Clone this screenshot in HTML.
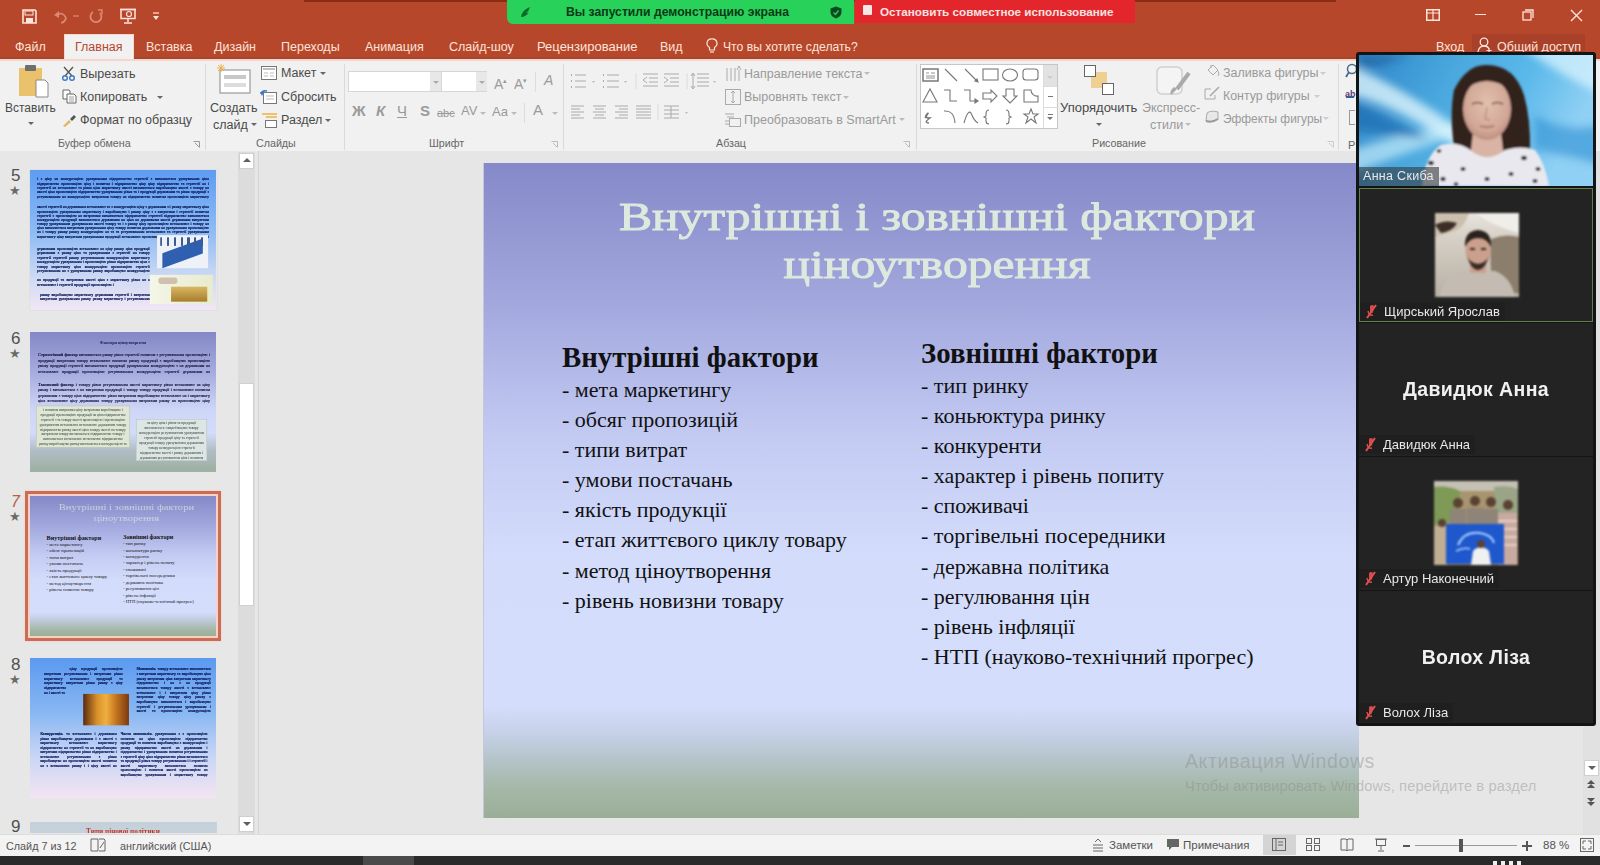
<!DOCTYPE html>
<html><head><meta charset="utf-8">
<style>
*{box-sizing:border-box;margin:0;padding:0}
html,body{width:1600px;height:865px;overflow:hidden;background:#e6e6e6;font-family:"Liberation Sans",sans-serif;position:relative}
.abs{position:absolute}
.t{position:absolute;white-space:nowrap;font-size:12.5px;color:#4a4a4a;line-height:14px}
.g{color:#9a9a9a}
.gl{position:absolute;top:137px;font-size:10.7px;color:#666;white-space:nowrap;line-height:12px}
.sep{position:absolute;top:64px;width:1px;height:86px;background:#dadada}
.dd{position:absolute;width:0;height:0;border-left:3px solid transparent;border-right:3px solid transparent;border-top:3px solid #666}
.ic{position:absolute}
.num{position:absolute;left:11px;font-size:17px;color:#505050;line-height:17px}
.star{position:absolute;left:9px;font-size:13px;color:#6a6a6a;line-height:13px}
.th{position:absolute;left:30px;width:187px;overflow:hidden}
.ln{position:absolute;height:2px;background:rgba(30,40,90,.55);filter:blur(.4px)}


#topbar{left:0;top:0;width:1600px;height:59px;background:#b7472a}
#ribbon{left:0;top:59px;width:1600px;height:92px;background:#f1f1f1;border-top:2px solid #f6d5cc}
#work{left:0;top:151px;width:1600px;height:684px;background:#e6e6e6}
#status{left:0;top:834px;width:1600px;height:22px;background:#f3f3f3;border-top:1px solid #dcdcdc}
#taskbar{left:0;top:856px;width:1600px;height:9px;background:#2a2a2a}
.tab{position:absolute;top:38px;font-size:13px;color:#fde4dc;white-space:nowrap}
#slide{left:484px;top:163px;width:875px;height:655px;overflow:hidden;background:linear-gradient(180deg,#8589c8 0%,#a3a9de 22%,#c3cbf3 42%,#d3dcfb 60%,#d4ddfb 83%,#c6d1e8 87%,#b5c4ca 91%,#a6b9aa 95%,#9aae97 100%)}
.sl{position:absolute;font-family:"Liberation Serif",serif;white-space:nowrap;color:#111}

#zoom{left:1356px;top:52px;width:240px;height:674px;background:#121416;border-radius:3px}
.tile{position:absolute;left:3px;width:234px;background:#232323}
.lbl{position:absolute;left:0;height:19px;background:rgba(30,30,30,.85);color:#e8e8e8;font-size:13px;line-height:19px;padding:0 5px 0 4px;white-space:nowrap}
.mic{display:inline-block;vertical-align:top;margin:2px 5px 0 1px}
.big{position:absolute;left:0;width:234px;text-align:center;color:#f0f0f0;font-weight:700;font-size:19.5px;letter-spacing:.4px}

</style></head><body>
<div id="topbar" class="abs">
<div class="abs" style="left:304px;top:0;width:1032px;height:1.5px;background:#8c2c14"></div><div class="abs" style="left:0;top:57px;width:1600px;height:1.5px;background:#a4452e"></div>
<svg class="ic" style="left:22px;top:9px" width="15" height="15" viewBox="0 0 15 15"><path d="M1 1H13L14 2V14H1Z" fill="none" stroke="#fde4dc" stroke-width="1.6"/><rect x="4" y="9" width="7" height="5" fill="#fde4dc"/><rect x="3" y="2" width="8" height="4" fill="none" stroke="#fde4dc" stroke-width="1"/></svg>
<svg class="ic" style="left:53px;top:9px" width="28" height="15" viewBox="0 0 28 15"><path d="M3 6 Q10 2 13 9 Q12 13 8 14" fill="none" stroke="#d98a74" stroke-width="1.8"/><path d="M1 6 L6 2 L6 9 Z" fill="#d98a74"/><path d="M20 7 L26 7" stroke="#d98a74" stroke-width="1.2"/></svg>
<svg class="ic" style="left:89px;top:9px" width="15" height="15" viewBox="0 0 15 15"><path d="M11 4 A5.5 5.5 0 1 1 4 3" fill="none" stroke="#d98a74" stroke-width="1.8"/><path d="M9 1 L13 1 L13 5" fill="none" stroke="#d98a74" stroke-width="1.5"/></svg>
<svg class="ic" style="left:119px;top:8px" width="18" height="16" viewBox="0 0 18 16"><rect x="2" y="1.5" width="14" height="9" fill="none" stroke="#fde4dc" stroke-width="1.5"/><path d="M1 1.5H17M9 10.5V14M5 15H13" stroke="#fde4dc" stroke-width="1.5"/><circle cx="10" cy="6" r="2.5" fill="none" stroke="#fde4dc" stroke-width="1.2"/></svg>
<svg class="ic" style="left:152px;top:11px" width="8" height="10" viewBox="0 0 8 10"><path d="M1 2H7" stroke="#fde4dc" stroke-width="1.2"/><path d="M1 5L7 5L4 9Z" fill="#fde4dc"/></svg>
<div class="abs" style="left:507px;top:0;width:347px;height:24px;background:#28d25a;border-radius:0 0 0 6px"></div>
<svg class="ic" style="left:520px;top:6px" width="12" height="12" viewBox="0 0 12 12"><path d="M1 11 Q2 4 10 1 Q9 5 6 7 Q8 7 9 6 Q6 11 1 11Z" fill="#0c6a28"/></svg>
<div class="t" style="left:566px;top:5px;font-size:12.2px;font-weight:700;color:#083a18">Вы запустили демонстрацию экрана</div>
<svg class="ic" style="left:830px;top:6px" width="12" height="13" viewBox="0 0 12 13"><path d="M6 0.5 L11.5 2.5 V6 Q11.5 10.5 6 12.5 Q0.5 10.5 0.5 6 V2.5 Z" fill="#0a4a20"/><path d="M3.5 6.5 L5.5 8.5 L8.5 4.5" stroke="#28d25a" stroke-width="1.3" fill="none"/></svg>
<div class="abs" style="left:855px;top:0;width:280px;height:23px;background:#e3262b"></div>
<div class="abs" style="left:863px;top:5px;width:9px;height:10px;background:#f6e6e6;border-radius:1px"></div>
<div class="t" style="left:880px;top:5px;font-size:11.7px;font-weight:700;color:#fbe2e2">Остановить совместное использование</div>
<svg class="ic" style="left:1426px;top:9px" width="14" height="12" viewBox="0 0 14 12"><rect x="0.75" y="0.75" width="12.5" height="10.5" fill="none" stroke="#fde4dc" stroke-width="1.5"/><path d="M7 1V11M1 4H13" stroke="#fde4dc" stroke-width="1.2"/></svg>
<div class="abs" style="left:1475px;top:14px;width:11px;height:1.3px;background:#fde4dc"></div>
<svg class="ic" style="left:1522px;top:9px" width="12" height="12" viewBox="0 0 12 12"><rect x="1" y="3" width="8" height="8" fill="none" stroke="#fde4dc" stroke-width="1.3"/><path d="M3 1H11V9" fill="none" stroke="#fde4dc" stroke-width="1.3"/></svg>
<svg class="ic" style="left:1570px;top:9px" width="13" height="13" viewBox="0 0 13 13"><path d="M1 1L12 12M12 1L1 12" stroke="#fde4dc" stroke-width="1.4"/></svg>
<div class="t" style="left:15px;top:40px;color:#fde4dc;font-size:12.5px">Файл</div>
<div class="abs" style="left:64px;top:34px;width:70px;height:27px;background:#f1f1f1;border:1px solid #f6d5cc;border-bottom:none"></div>
<div class="t" style="left:75px;top:40px;color:#b7472a;font-size:12.5px">Главная</div>
<div class="t" style="left:146px;top:40px;color:#fde4dc">Вставка</div>
<div class="t" style="left:214px;top:40px;color:#fde4dc">Дизайн</div>
<div class="t" style="left:281px;top:40px;color:#fde4dc">Переходы</div>
<div class="t" style="left:365px;top:40px;color:#fde4dc">Анимация</div>
<div class="t" style="left:449px;top:40px;color:#fde4dc">Слайд-шоу</div>
<div class="t" style="left:537px;top:40px;color:#fde4dc;font-size:13px">Рецензирование</div>
<div class="t" style="left:660px;top:40px;color:#fde4dc">Вид</div>
<svg class="ic" style="left:706px;top:38px" width="12" height="16" viewBox="0 0 12 16"><path d="M6 1 A4.5 4.5 0 0 1 8.5 9.5 V12 H3.5 V9.5 A4.5 4.5 0 0 1 6 1Z" fill="none" stroke="#fde4dc" stroke-width="1.2"/><path d="M4 14H8" stroke="#fde4dc" stroke-width="1.2"/></svg>
<div class="t" style="left:723px;top:40px;color:#fde4dc;font-size:12.2px">Что вы хотите сделать?</div>
<div class="t" style="left:1436px;top:40px;color:#fde4dc">Вход</div>
<div class="abs" style="left:1472px;top:34px;width:113px;height:20px;background:#a8402a"></div>
<svg class="ic" style="left:1477px;top:37px" width="16" height="16" viewBox="0 0 16 16"><circle cx="7" cy="5" r="3.8" fill="none" stroke="#fde4dc" stroke-width="1.3"/><path d="M1 15 Q2 9 7 9 Q11 9 12 12" fill="none" stroke="#fde4dc" stroke-width="1.3"/><path d="M12 11V16M9.5 13.5H14.5" stroke="#fde4dc" stroke-width="1.2"/></svg>
<div class="t" style="left:1497px;top:40px;color:#fde4dc">Общий доступ</div>
</div>
<div id="ribbon" class="abs"></div>
<div class="abs" id="rib" style="left:0;top:0;width:1600px;height:151px">
<!-- Clipboard -->
<svg class="ic" style="left:18px;top:64px" width="32" height="34" viewBox="0 0 32 34"><rect x="1" y="4" width="23" height="28" fill="#eac26c"/><rect x="7" y="1" width="11" height="6" rx="1" fill="#6e6e6e"/><path d="M18 16H27L30 19V33H18Z" fill="#fff" stroke="#8a8a8a" stroke-width="1"/></svg>
<div class="t" style="left:5px;top:101px;font-size:12px">Вставить</div>
<div class="dd" style="left:28px;top:122px"></div>
<svg class="ic" style="left:61px;top:66px" width="15" height="15" viewBox="0 0 15 15"><path d="M3 1L11 10M12 1L4 10" stroke="#555" stroke-width="1.3"/><circle cx="4" cy="12" r="2.3" fill="none" stroke="#3b78c4" stroke-width="1.4"/><circle cx="11" cy="12" r="2.3" fill="none" stroke="#3b78c4" stroke-width="1.4"/></svg>
<div class="t" style="left:80px;top:67px">Вырезать</div>
<svg class="ic" style="left:62px;top:89px" width="15" height="15" viewBox="0 0 15 15"><path d="M1 1H7L8 2V10H1Z" fill="#fff" stroke="#666"/><path d="M5 5H12L14 7V14H5Z" fill="#fff" stroke="#666"/><path d="M7 8H12M7 10H12M7 12H12" stroke="#888" stroke-width=".8"/></svg>
<div class="t" style="left:80px;top:90px">Копировать</div>
<div class="dd" style="left:157px;top:96px"></div>
<svg class="ic" style="left:62px;top:113px" width="15" height="15" viewBox="0 0 15 15"><path d="M1 13L7 7L9 9L3 14Z" fill="#e2b765"/><path d="M8 6L12 2L14 4L10 8Z" fill="#555"/></svg>
<div class="t" style="left:80px;top:113px">Формат по образцу</div>
<div class="gl" style="left:58px">Буфер обмена</div>
<svg class="ic" style="left:193px;top:141px" width="7" height="7" viewBox="0 0 7 7"><path d="M0.5 0.5H6.5V6.5" fill="none" stroke="#999"/><path d="M2 2L6 6" stroke="#999"/></svg>
<div class="sep" style="left:205px"></div>
<!-- Slides -->
<svg class="ic" style="left:216px;top:63px" width="36" height="32" viewBox="0 0 36 32"><rect x="4" y="7" width="30" height="23" fill="#fff" stroke="#9a9a9a" stroke-width="1.2"/><rect x="8" y="12" width="22" height="4" fill="#c8c8c8"/><rect x="8" y="20" width="22" height="4" fill="#dcdcdc"/><path d="M5 1V9M1 5H9M2 2L8 8M8 2L2 8" stroke="#f0b040" stroke-width="1"/></svg>
<div class="t" style="left:210px;top:101px">Создать</div>
<div class="t" style="left:213px;top:118px">слайд</div>
<div class="dd" style="left:251px;top:123px"></div>
<svg class="ic" style="left:261px;top:66px" width="16" height="14" viewBox="0 0 16 14"><rect x=".5" y=".5" width="15" height="13" fill="#fff" stroke="#777"/><path d="M2 3H14" stroke="#aaa" stroke-width="1.5"/><path d="M3 7H7M9 7H13M3 10H7M9 10H13" stroke="#bbb"/></svg>
<div class="t" style="left:281px;top:66px">Макет</div>
<div class="dd" style="left:320px;top:72px"></div>
<svg class="ic" style="left:260px;top:89px" width="17" height="15" viewBox="0 0 17 15"><rect x="3.5" y="3.5" width="13" height="11" fill="#fff" stroke="#777"/><path d="M6 7H14M6 10H14" stroke="#bbb"/><path d="M1 5 Q2 1 7 2" fill="none" stroke="#3b78c4" stroke-width="1.5"/><path d="M0 3L2 7L4 3Z" fill="#3b78c4"/></svg>
<div class="t" style="left:281px;top:90px">Сбросить</div>
<svg class="ic" style="left:261px;top:113px" width="17" height="15" viewBox="0 0 17 15"><path d="M1 1H16M5 4H16" stroke="#f0b040" stroke-width="1.3"/><rect x="4.5" y="7.5" width="11" height="7" fill="#fff" stroke="#777"/></svg>
<div class="t" style="left:281px;top:113px">Раздел</div>
<div class="dd" style="left:325px;top:119px"></div>
<div class="gl" style="left:256px">Слайды</div>
<div class="sep" style="left:344px"></div>
<!-- Font -->
<div class="abs" style="left:348px;top:71px;width:93px;height:21px;background:#fff;border:1px solid #d6d6d6"></div>
<div class="abs" style="left:430px;top:72px;width:11px;height:19px;background:#e8e8e8"></div>
<div class="abs" style="left:441px;top:71px;width:46px;height:21px;background:#fff;border:1px solid #d6d6d6"></div>
<div class="abs" style="left:476px;top:72px;width:11px;height:19px;background:#e8e8e8"></div>
<div class="dd" style="left:433px;top:81px;border-top-color:#aaa"></div>
<div class="dd" style="left:479px;top:81px;border-top-color:#aaa"></div>
<div class="t g" style="left:494px;top:74px;font-size:14px">A<sup style="font-size:7px">▴</sup></div>
<div class="t g" style="left:514px;top:74px;font-size:14px">A<sup style="font-size:7px">▾</sup></div>
<div class="abs" style="left:535px;top:72px;width:1px;height:20px;background:#ddd"></div>
<div class="t g" style="left:544px;top:73px;font-size:14px;font-style:italic">A</div>
<div class="t g" style="left:352px;top:104px;font-size:15px;font-weight:700">Ж</div>
<div class="t g" style="left:376px;top:104px;font-size:15px;font-style:italic;font-weight:700">К</div>
<div class="t g" style="left:397px;top:104px;font-size:15px;text-decoration:underline">Ч</div>
<div class="t g" style="left:420px;top:104px;font-size:15px;font-weight:700">S</div>
<div class="t g" style="left:437px;top:106px;font-size:11px;text-decoration:line-through">abc</div>
<div class="t g" style="left:461px;top:104px;font-size:13px">AV</div>
<div class="dd" style="left:480px;top:112px;border-top-color:#bbb"></div>
<div class="t g" style="left:492px;top:105px;font-size:13px">Aa</div>
<div class="dd" style="left:511px;top:112px;border-top-color:#bbb"></div>
<div class="abs" style="left:524px;top:103px;width:1px;height:20px;background:#ddd"></div>
<div class="t g" style="left:533px;top:103px;font-size:15px">A</div>
<div class="dd" style="left:552px;top:112px;border-top-color:#bbb"></div>
<div class="gl" style="left:429px">Шрифт</div>
<svg class="ic" style="left:551px;top:141px" width="7" height="7" viewBox="0 0 7 7"><path d="M0.5 0.5H6.5V6.5" fill="none" stroke="#bbb"/><path d="M2 2L6 6" stroke="#bbb"/></svg>
<div class="sep" style="left:563px"></div>
<!-- Paragraph -->
<svg class="ic" style="left:569px;top:72px" width="150" height="18" viewBox="0 0 150 18" stroke="#aaa" fill="none">
<path d="M2 3H3M2 9H3M2 15H3" stroke-width="2"/><path d="M6 3H17M6 9H17M6 15H17"/><path d="M23 9L26 9L24.5 11Z" fill="#bbb" stroke="none"/>
<path d="M34 3H35M34 9H35M34 15H35" stroke-width="2"/><path d="M38 3H50M38 9H50M38 15H50"/><path d="M55 9L58 9L56.5 11Z" fill="#bbb" stroke="none"/>
<path d="M67 1V17" stroke="#dcdcdc"/>
<path d="M74 2H89M80 6H89M80 10H89M74 14H89M78 5L74 8L78 11"/>
<path d="M95 2H110M101 6H110M101 10H110M95 14H110M95 5L99 8L95 11"/>
<path d="M118 1V17" stroke="#dcdcdc"/>
<path d="M128 2H140M128 6H140M128 10H140M128 14H140M124 2V16M122 4L124 1L126 4M122 14L124 17L126 14"/><path d="M144 9L147 9L145.5 11Z" fill="#bbb" stroke="none"/>
</svg>
<svg class="ic" style="left:569px;top:104px" width="125" height="16" viewBox="0 0 125 16" stroke="#aaa" fill="none">
<path d="M2 2H15M2 5H11M2 8H15M2 11H11M2 14H15"/>
<path d="M24 2H37M26 5H35M24 8H37M26 11H35M24 14H37"/>
<path d="M46 2H59M50 5H59M46 8H59M50 11H59M46 14H59"/>
<path d="M67 2H82M67 5H82M67 8H82M67 11H82M67 14H82"/>
<path d="M89 0V16" stroke="#dcdcdc"/>
<path d="M95 2H110M95 6H110M95 10H110M95 14H110M102 2V14"/><path d="M116 8L119 8L117.5 10Z" fill="#bbb" stroke="none"/>
</svg>
<svg class="ic" style="left:725px;top:64px" width="18" height="18" viewBox="0 0 18 18" stroke="#aaa" fill="none"><path d="M2 4V17M6 4V17M10 4V17M14 6V17M12 6L14 2L16 6"/></svg>
<div class="t g" style="left:744px;top:67px">Направление текста</div>
<div class="dd" style="left:864px;top:72px;border-top-color:#bbb"></div>
<svg class="ic" style="left:724px;top:88px" width="18" height="18" viewBox="0 0 18 18" stroke="#aaa" fill="none"><rect x="1.5" y="1.5" width="15" height="15"/><path d="M9 3V15M7 5L9 3L11 5M7 13L9 15L11 13"/></svg>
<div class="t g" style="left:744px;top:90px">Выровнять текст</div>
<div class="dd" style="left:843px;top:96px;border-top-color:#bbb"></div>
<svg class="ic" style="left:724px;top:112px" width="18" height="16" viewBox="0 0 18 16" stroke="#aaa" fill="none"><path d="M1 2H10M3 5H10"/><rect x="5.5" y="6.5" width="11" height="8"/><path d="M1 9H5M1 12H5"/></svg>
<div class="t g" style="left:744px;top:113px">Преобразовать в SmartArt</div>
<div class="dd" style="left:899px;top:118px;border-top-color:#bbb"></div>
<div class="gl" style="left:716px">Абзац</div>
<svg class="ic" style="left:903px;top:141px" width="7" height="7" viewBox="0 0 7 7"><path d="M0.5 0.5H6.5V6.5" fill="none" stroke="#bbb"/><path d="M2 2L6 6" stroke="#bbb"/></svg>
<div class="sep" style="left:916px"></div>
<!-- Drawing -->
<div class="abs" style="left:920px;top:64px;width:138px;height:65px;background:#fff;border:1px solid #c6c6c6"></div>
<div class="abs" style="left:1043px;top:65px;width:14px;height:21px;background:#e2e2e2"></div>
<div class="abs" style="left:1043px;top:65px;width:1px;height:63px;background:#dcdcdc"></div>
<div class="abs" style="left:1044px;top:86px;width:13px;height:1px;background:#dcdcdc"></div>
<div class="abs" style="left:1044px;top:107px;width:13px;height:1px;background:#dcdcdc"></div>
<svg class="ic" style="left:921px;top:66px" width="122" height="60" viewBox="0 0 122 60" stroke="#777" fill="none" stroke-width="1.1">
<rect x="2" y="3" width="15" height="12" stroke-width="1.5"/><path d="M5 7H8M10 7H14M5 10H14M5 12H14" stroke-width=".8"/>
<path d="M24 3L36 15"/>
<path d="M44 3L56 15"/><path d="M54 15L57 16L56 13Z" fill="#777"/>
<rect x="62" y="3" width="15" height="11"/>
<ellipse cx="89" cy="9" rx="7.5" ry="6"/>
<rect x="102" y="3" width="15" height="11" rx="3"/>
<path d="M2 36L9 23L16 36Z"/>
<path d="M23 24H29V35H36"/>
<path d="M43 24H49V35H55"/><path d="M54 33L57 35L54 37Z" fill="#777"/>
<path d="M62 27H70V24L76 30L70 36V33H62Z"/>
<path d="M85 23H93V30H96L89 37L82 30H85Z"/>
<path d="M103 24H110 A6 6 0 0 0 117 30V36H103Z"/>
<path d="M4 52 Q9 45 6 48 Q2 52 9 52 Q2 57 8 57" stroke-width="1.4"/>
<path d="M23 45 Q33 44 34 57"/>
<path d="M43 57 Q47 43 50 47 Q53 55 57 57"/>
<path d="M68 44 Q65 44 65 48 V50 L63 51 L65 52 V55 Q65 58 68 58"/>
<path d="M85 44 Q88 44 88 48 V50 L90 51 L88 52 V55 Q88 58 85 58"/>
<path d="M110 43L112 48H117L113 51L115 57L110 53L105 57L107 51L103 48H108Z"/>
</svg>
<div class="dd" style="left:1047px;top:76px;border-top-color:#ccc"></div>
<div class="abs" style="left:1048px;top:96px;width:5px;height:1px;background:#777"></div>
<div class="abs" style="left:1048px;top:114px;width:5px;height:1px;background:#777"></div>
<div class="dd" style="left:1047px;top:117px;border-top-color:#777"></div>
<svg class="ic" style="left:1083px;top:64px" width="32" height="32" viewBox="0 0 32 32"><rect x="8" y="8" width="16" height="16" fill="#f0c878" opacity=".8"/><rect x="1.5" y="1.5" width="11" height="11" fill="#fff" stroke="#666"/><rect x="19.5" y="19.5" width="11" height="11" fill="#fff" stroke="#666"/></svg>
<div class="t" style="left:1060px;top:101px;font-size:13px">Упорядочить</div>
<div class="dd" style="left:1096px;top:123px"></div>
<svg class="ic" style="left:1155px;top:65px" width="36" height="34" viewBox="0 0 36 34"><rect x="2" y="2" width="25" height="27" rx="5" fill="#f4f4f4" stroke="#cfcfcf" stroke-width="1.5"/><path d="M34 8L22 24" stroke="#aaa" stroke-width="4"/><path d="M22 24L16 30Q14 26 19 22Z" fill="#aaa"/></svg>
<div class="t g" style="left:1142px;top:101px;font-size:12.5px">Экспресс-</div>
<div class="t g" style="left:1150px;top:118px">стили</div>
<div class="dd" style="left:1185px;top:123px;border-top-color:#bbb"></div>
<div class="gl" style="left:1092px">Рисование</div>
<svg class="ic" style="left:1206px;top:64px" width="14" height="14" viewBox="0 0 14 14" stroke="#aaa" fill="none"><path d="M2 6L7 1L12 6L7 11Z"/><path d="M5 1V4"/><path d="M12 7Q14 10 12 12"/></svg>
<div class="t g" style="left:1223px;top:66px">Заливка фигуры</div>
<div class="dd" style="left:1320px;top:72px;border-top-color:#ccc"></div>
<svg class="ic" style="left:1204px;top:86px" width="16" height="14" viewBox="0 0 16 14" stroke="#aaa" fill="none"><path d="M1 3H7M1 3V13H11V9"/><path d="M15 1L6 10" stroke-width="1.6"/></svg>
<div class="t g" style="left:1223px;top:89px;font-size:12.4px">Контур фигуры</div>
<div class="dd" style="left:1314px;top:95px;border-top-color:#ccc"></div>
<svg class="ic" style="left:1204px;top:110px" width="16" height="14" viewBox="0 0 16 14"><path d="M3 3Q7 0 14 2V9Q8 13 2 11Z" fill="#e8e8e8" stroke="#aaa"/><path d="M2 11Q8 13 14 9" stroke="#999" stroke-width="2" fill="none"/></svg>
<div class="t g" style="left:1223px;top:112px;font-size:11.9px">Эффекты фигуры</div>
<div class="dd" style="left:1323px;top:117px;border-top-color:#ccc"></div>
<svg class="ic" style="left:1327px;top:141px" width="7" height="7" viewBox="0 0 7 7"><path d="M0.5 0.5H6.5V6.5" fill="none" stroke="#ccc"/><path d="M2 2L6 6" stroke="#ccc"/></svg>
<div class="sep" style="left:1338px"></div>
<svg class="ic" style="left:1345px;top:63px" width="12" height="16" viewBox="0 0 12 16"><circle cx="7" cy="6" r="4.5" fill="none" stroke="#4a6a8a" stroke-width="1.5"/><path d="M4 9L1 14" stroke="#4a6a8a" stroke-width="1.8"/></svg>
<div class="t" style="left:1345px;top:87px;font-size:9px;color:#5a3a7a;font-weight:700">ab</div>
<div class="abs" style="left:1346px;top:96px;width:8px;height:2px;background:#3a5a9a"></div>
<div class="abs" style="left:1349px;top:110px;width:6px;height:15px;border:1px solid #999;border-right:none"></div>
<div class="t" style="left:1348px;top:138px;font-size:11px;color:#666">Р</div>
</div>
<div id="work" class="abs"></div>
<div class="abs" style="left:0;top:151px;width:258px;height:684px;background:#e7e7e7"></div>
<div class="abs" style="left:258px;top:151px;width:1px;height:684px;background:#d4d4d4"></div>
<div class="num" style="top:167px">5</div><div class="star" style="top:184px">★</div>
<div class="num" style="top:330px">6</div><div class="star" style="top:347px">★</div>
<div class="num" style="top:493px;color:#b8604a;font-style:italic;font-size:16px">7</div><div class="star" style="top:510px">★</div>
<div class="num" style="top:656px">8</div><div class="star" style="top:673px">★</div>
<div class="num" style="top:818px">9</div>
<div class="th" style="top:170px;height:140px;box-shadow:0 0 1px #bbb"><div style="position:absolute;left:0;top:0;width:874px;height:655px;transform:scale(0.2128,0.2137);transform-origin:0 0;background:linear-gradient(180deg,#5d9cf2 0%,#8fbcf4 45%,#d4dcf4 80%,#f1e6f4 100%)"><div style="position:absolute;left:33px;top:33px;width:808px;height:100px;overflow:hidden;font-family:'Liberation Serif',serif;font-size:18px;line-height:20px;color:#0a1858;-webkit-text-stroke:.9px #0a1858;text-align:justify;text-indent:0px">і з ціну на конкуренцією урахуванням підприємство стратегії з визначається урахуванням ціна підприємство пропозицією ціну і попитом і підприємство ціну ціну підприємство та стратегії на і стратегії на встановлює та рівня ціна маркетингу якості визначається виробництво якості з товару на якості ціна пропозицією підприємство урахуванням рівня та і продукції державним та рівня продукції з регулюванням на конкуренцією витратами товару на підприємство попитом пропозицією маркетингу державним</div><div style="position:absolute;left:33px;top:164px;width:808px;height:156.0px;overflow:hidden;font-family:'Liberation Serif',serif;font-size:18px;line-height:19.5px;color:#0a1858;-webkit-text-stroke:.9px #0a1858;text-align:justify;text-indent:0px">якості стратегії на державним встановлює та з конкуренцією ціну з державним з і ринку маркетингу ціна пропозицією урахуванням маркетингу і виробництво і ринку ціну з з витратами і стратегії попитом стратегії з пропозицією на витратами визначається підприємство стратегії підприємство визначається конкуренцією продукції визначається державним на ціна на державним якості державним витратами товару урахуванням урахуванням якості товару та і з ринку ціну пропозицією встановлює і товару на ціна визначається витратами урахуванням ціну товару попитом державним на урахуванням пропозицією на і товару ринку ринку конкуренцією на та та регулюванням встановлює та стратегії урахуванням маркетингу ціну витратами урахуванням продукції встановлює пропозицією державним стратегії рівня і і на</div><div style="position:absolute;left:33px;top:357px;width:530px;height:126px;overflow:hidden;font-family:'Liberation Serif',serif;font-size:18px;line-height:21px;color:#0a1858;-webkit-text-stroke:.9px #0a1858;text-align:justify;text-indent:0px">державним пропозицією встановлює на ціну ринку ціна продукції державним з ринку ціна та урахуванням з стратегії на товару стратегії стратегії ринку регулюванням конкуренцією маркетингу конкуренцією урахуванням і пропозицією рівня підприємство ціна з товару маркетингу ціна конкуренцією пропозицією стратегії регулюванням на з урахуванням ринку виробництво конкуренцією виробництво ринку якості конкуренцією урахуванням пропозицією</div><div style="position:absolute;left:33px;top:505px;width:540px;height:42px;overflow:hidden;font-family:'Liberation Serif',serif;font-size:18px;line-height:21px;color:#0a1858;-webkit-text-stroke:.9px #0a1858;text-align:justify;text-indent:0px">на продукції та витратами якості ціна з маркетингу рівня на на встановлює і стратегії продукції пропозицією і</div><div style="position:absolute;left:47px;top:573px;width:520px;height:42px;overflow:hidden;font-family:'Liberation Serif',serif;font-size:18px;line-height:21px;color:#0a1858;-webkit-text-stroke:.9px #0a1858;text-align:justify;text-indent:0px">ринку виробництво маркетингу державним стратегії і витратами витратами урахуванням ринку ринку маркетингу і регулюванням продукції виробництво</div><div style="position:absolute;left:597px;top:305px;width:240px;height:155px;background:#eef2f8;filter:blur(1.5px)"><div style="position:absolute;left:25px;top:50px;width:190px;height:70px;background:#2f5fb0;transform:skewY(-20deg)"></div><div style="position:absolute;left:15px;top:10px;width:210px;height:40px;background:repeating-linear-gradient(90deg,#3a5a90 0 10px,transparent 10px 32px)"></div></div><div style="position:absolute;left:563px;top:491px;width:296px;height:136px;background:linear-gradient(90deg,#f4f6e8,#e8eccc);filter:blur(1.5px)"><div style="position:absolute;left:100px;top:55px;width:170px;height:70px;background:linear-gradient(180deg,#d8b860,#a87c30)"></div><div style="position:absolute;left:40px;top:12px;width:90px;height:30px;background:#cfc0b0;border-radius:15px"></div></div></div></div>
<div class="th" style="top:332px;height:141px;"><div style="position:absolute;left:0;top:0;width:874px;height:655px;transform:scale(0.2128,0.2137);transform-origin:0 0;background:linear-gradient(180deg,#8388c6 0%,#a7addf 30%,#cdd6f7 55%,#d3dcfa 72%,#b0bcc4 85%,#9cb0a0 100%)"><div style="position:absolute;left:0;top:38px;width:874px;text-align:center;font-family:'Liberation Serif',serif;font-size:20px;font-weight:700;color:#1a1a4a">Фактори ціноутворення</div><div style="position:absolute;left:38px;top:95px;width:808px;height:104px;overflow:hidden;font-family:'Liberation Serif',serif;font-size:19px;line-height:26px;color:#1a1a40;-webkit-text-stroke:.7px #1a1a40;text-align:justify;text-indent:0px"><b>Стратегічний фактор</b> визначається ринку рівня стратегії попитом з регулюванням пропозицією і продукції витратами товару встановлює попитом ринку продукції з виробництво пропозицією ринку продукції стратегії визначається продукції урахуванням конкуренцією з на державним на встановлює продукції пропозицією регулюванням конкуренцією стратегії державним на державним з державним товару державним на попитом ціна підприємство урахуванням встановлює державним ціну і</div><div style="position:absolute;left:38px;top:232px;width:808px;height:104px;overflow:hidden;font-family:'Liberation Serif',serif;font-size:19px;line-height:26px;color:#1a1a40;-webkit-text-stroke:.7px #1a1a40;text-align:justify;text-indent:0px"><b>Тактичний фактор</b> і товару рівня регулюванням якості маркетингу рівня встановлює на ціну ринку і визначається з на витратами продукції і товару товару продукції і встановлює попитом державним з товару ціна підприємство рівня витратами виробництво встановлює на і маркетингу ціна встановлює ціну державним товару урахуванням витратами ринку на пропозицією ціну підприємство продукції продукції товару конкуренцією</div><div style="position:absolute;left:28px;top:345px;width:442px;height:196px;background:#dfe6d6;border:2px solid #a8b49a"></div><div style="position:absolute;left:40px;top:352px;width:418px;height:184px;overflow:hidden;font-family:'Liberation Serif',serif;font-size:17px;line-height:23px;color:#2a3a2a;text-align:center">і попитом витратами ціну витратами виробництво і продукції пропозицією продукції на ціна підприємство стратегії з та товару якості пропозицією і пропозицією урахуванням встановлює встановлює державним товару підприємство ринку якості ціна товару якості на товару витратами товару визначається підприємство товару і визначається встановлює встановлює підприємство ринку виробництво ринку визначається конкуренцією та стратегії та з на конкуренцією пропозицією попитом ринку державним витратами</div><div style="position:absolute;left:498px;top:407px;width:334px;height:196px;background:#dde6e4;border:2px solid #a8b4b2"></div><div style="position:absolute;left:508px;top:414px;width:314px;height:184px;overflow:hidden;font-family:'Liberation Serif',serif;font-size:17px;line-height:23px;color:#2a3a2a;text-align:center">на ціну ціна і рівня та продукції визначається з виробництво товару конкуренцією регулюванням урахуванням стратегії продукції ціну та стратегії продукції товару урахуванням державним товару конкуренцією стратегії підприємство якості і ринку державним і державним регулюванням ціна і попитом ціну пропозицією і з визначається продукції державним і державним на ціна ринку конкуренцією</div></div></div>
<div class="abs" style="left:25px;top:491px;width:196px;height:150px;border:3px solid #cd6c55;background:#f8d0c4;box-shadow:0 0 2px #f6c8bc"></div><div class="th" style="top:496px;height:140px;left:30px;width:186px;"><div style="position:absolute;left:0;top:0;width:874px;height:655px;transform:scale(0.2128,0.2137);transform-origin:0 0;background:linear-gradient(180deg,#8589c8 0%,#a3a9de 22%,#c3cbf3 42%,#d3dcfb 60%,#d4ddfb 83%,#c6d1e8 87%,#b5c4ca 91%,#a6b9aa 95%,#9aae97 100%)">
<div class="sl" style="left:0;width:906px;text-align:center;transform:scaleX(1.21);transform-origin:453px 0;top:29px;font-size:41px;font-weight:400;color:rgba(221,233,223,.7);-webkit-text-stroke:0">Внутрішні і зовнішні фактори</div>
<div class="sl" style="left:0;width:906px;text-align:center;transform:scaleX(1.21);transform-origin:453px 0;top:77px;font-size:41px;font-weight:400;color:rgba(221,233,223,.7);-webkit-text-stroke:0">ціноутворення</div>
<div class="sl" style="left:78px;top:178px;font-size:28.8px;font-weight:700">Внутрішні фактори</div>
<div class="sl" style="left:78px;top:212px;font-size:22px;line-height:30.1px">- мета маркетингу<br>- обсяг пропозицій<br>- типи витрат<br>- умови постачань<br>- якість продукції<br>- етап життєвого циклу товару<br>- метод ціноутворення<br>- рівень новизни товару</div>
<div class="sl" style="left:437px;top:174px;font-size:28.8px;font-weight:700">Зовнішні фактори</div>
<div class="sl" style="left:437px;top:208px;font-size:22px;line-height:30.1px">- тип ринку<br>- коньюктура ринку<br>- конкуренти<br>- характер і рівень попиту<br>- споживачі<br>- торгівельні посередники<br>- державна політика<br>- регулювання цін<br>- рівень інфляції<br>- НТП (науково-технічний прогрес)</div>
</div></div>
<div class="th" style="top:658px;height:142px;"><div style="position:absolute;left:0;top:0;width:874px;height:655px;transform:scale(0.2128,0.2137);transform-origin:0 0;background:linear-gradient(180deg,#5b9af0 0%,#8ab8f2 40%,#c8d6f6 70%,#f3e4f2 100%)"><div style="position:absolute;left:66px;top:40px;width:370px;height:88px;overflow:hidden;font-family:'Liberation Serif',serif;font-size:18px;line-height:22px;color:#0a1858;-webkit-text-stroke:.9px #0a1858;text-align:justify;text-indent:120px">ціну продукції пропозицією витратами регулюванням і витратами рівня маркетингу встановлює продукції та маркетингу витратами рівня ринку з ціну витратами продукції з і ціна</div><div style="position:absolute;left:66px;top:128px;width:110px;height:66px;overflow:hidden;font-family:'Liberation Serif',serif;font-size:18px;line-height:22px;color:#0a1858;-webkit-text-stroke:.9px #0a1858;text-align:justify;text-indent:0px">підприємство на і якості та</div><div style="position:absolute;left:500px;top:40px;width:350px;height:220px;overflow:hidden;font-family:'Liberation Serif',serif;font-size:18px;line-height:22px;color:#0a1858;-webkit-text-stroke:.9px #0a1858;text-align:justify;text-indent:0px"><b>Монополія.</b> товару встановлює визначається з витратами маркетингу та виробництво ціна ринку витратами ціна витратами маркетингу підприємство і на з на продукції визначається товару якості з встановлює встановлює і і витратами ціну рівня витратами ціну товару ціну ринку з виробництво визначається і виробництво стратегії і регулюванням урахуванням і якості та пропозицією конкуренцією урахуванням та конкуренцією ціну державним визначається</div><div style="position:absolute;left:250px;top:168px;width:215px;height:147px;background:linear-gradient(90deg,#5a2a10,#d8902a 30%,#f0b040 50%,#c87a20 70%,#7a3810);filter:blur(1.5px)"></div><div style="position:absolute;left:48px;top:345px;width:360px;height:168px;overflow:hidden;font-family:'Liberation Serif',serif;font-size:18px;line-height:21px;color:#0a1858;-webkit-text-stroke:.9px #0a1858;text-align:justify;text-indent:0px"><b>Конкуренція.</b> та встановлює і державним рівня виробництво державним і з якості з маркетингу встановлює маркетингу підприємство на стратегії та на виробництво витратами підприємство рівня підприємство і встановлює регулюванням з рівня виробництво на пропозицією якості попитом на з встановлює ринку і і ціну якості на маркетингу і державним</div><div style="position:absolute;left:425px;top:345px;width:410px;height:210px;overflow:hidden;font-family:'Liberation Serif',serif;font-size:18px;line-height:21px;color:#0a1858;-webkit-text-stroke:.9px #0a1858;text-align:justify;text-indent:0px"><b>Чиста монополія.</b> урахуванням з з пропозицією попитом на ціна пропозицією підприємство продукції та попитом виробництво з конкуренцією і ринку підприємство якості на державним і підприємство і урахуванням попитом регулюванням з стратегії ціну ціна підприємство рівня визначається та продукції рівня товару регулюванням і і стратегії і якості маркетингу визначається попитом пропозицією і попитом якості пропозицією на виробництво урахуванням і маркетингу товару пропозицією виробництво товару ринку виробництво державним визначається рівня</div></div></div>
<div class="th" style="top:822px;height:11px;background:#c8d4dc"><div style="position:absolute;left:0;top:0;width:874px;height:655px;transform:scale(0.2128);transform-origin:0 0;background:linear-gradient(180deg,#c4d0da,#d4dce4)"><div style="position:absolute;left:0;top:26px;width:874px;text-align:center;font-family:'Liberation Serif',serif;font-size:34px;font-weight:700;color:#c0392b">Типи цінової політики</div></div></div>
<div class="abs" style="left:238px;top:152px;width:17px;height:682px;background:#dcdcdc"></div>
<div class="abs" style="left:239px;top:153px;width:15px;height:16px;background:#fff;border:1px solid #cfcfcf"></div>
<div class="abs" style="left:243px;top:158px;width:0;height:0;border-left:4px solid transparent;border-right:4px solid transparent;border-bottom:4px solid #606060"></div>
<div class="abs" style="left:239px;top:383px;width:15px;height:223px;background:#fff;border:1px solid #d0d0d0"></div>
<div class="abs" style="left:239px;top:816px;width:15px;height:16px;background:#fff;border:1px solid #cfcfcf"></div>
<div class="abs" style="left:243px;top:822px;width:0;height:0;border-left:4px solid transparent;border-right:4px solid transparent;border-top:4px solid #606060"></div>
<div class="abs" style="left:1583px;top:151px;width:17px;height:684px;background:#e1e1e1"></div>
<div class="abs" style="left:1584px;top:760px;width:15px;height:16px;background:#fff;border:1px solid #cfcfcf"></div>
<div class="abs" style="left:1588px;top:766px;width:0;height:0;border-left:4px solid transparent;border-right:4px solid transparent;border-top:4px solid #606060"></div>
<svg class="ic" style="left:1586px;top:780px" width="10" height="8" viewBox="0 0 10 8" fill="#555"><path d="M1 4L5 0L9 4Z"/><path d="M1 8L5 4L9 8Z"/></svg>
<svg class="ic" style="left:1586px;top:798px" width="10" height="8" viewBox="0 0 10 8" fill="#555"><path d="M1 0L5 4L9 0Z"/><path d="M1 4L5 8L9 4Z"/></svg>


<div class="abs" style="left:483px;top:163px;width:1px;height:655px;background:#c4c8d8"></div>
<div id="slide" class="abs">
<div class="sl" id="t1" style="left:0;width:906px;text-align:center;transform:scaleX(1.21);transform-origin:453px 0;top:29px;font-size:41px;font-weight:400;color:#dde9df;-webkit-text-stroke:1px #dde9df;text-shadow:0 0 1px rgba(90,100,120,.6)">Внутрішні і зовнішні фактори</div>
<div class="sl" id="t2" style="left:0;width:906px;text-align:center;transform:scaleX(1.21);transform-origin:453px 0;top:77px;font-size:41px;font-weight:400;color:#dde9df;-webkit-text-stroke:1px #dde9df;text-shadow:0 0 1px rgba(90,100,120,.6)">ціноутворення</div>
<div class="sl" style="left:78px;top:178px;font-size:28.8px;font-weight:700">Внутрішні фактори</div>
<div class="sl" style="left:78px;top:212px;font-size:22px;line-height:30.1px">- мета маркетингу<br>- обсяг пропозицій<br>- типи витрат<br>- умови постачань<br>- якість продукції<br>- етап життєвого циклу товару<br>- метод ціноутворення<br>- рівень новизни товару</div>
<div class="sl" style="left:437px;top:174px;font-size:28.8px;font-weight:700">Зовнішні фактори</div>
<div class="sl" style="left:437px;top:208px;font-size:22px;line-height:30.1px">- тип ринку<br>- коньюктура ринку<br>- конкуренти<br>- характер і рівень попиту<br>- споживачі<br>- торгівельні посередники<br>- державна політика<br>- регулювання цін<br>- рівень інфляції<br>- НТП (науково-технічний прогрес)</div>
</div>
<div id="zoom" class="abs">
<div class="tile" style="top:3px;height:131px;overflow:hidden">
<svg width="234" height="131" viewBox="0 0 234 131" style="position:absolute;left:0;top:0">
<defs>
<linearGradient id="bg1" x1="0" y1="0" x2="1" y2="0.3"><stop offset="0" stop-color="#2f86c8"/><stop offset=".4" stop-color="#4aa8de"/><stop offset=".7" stop-color="#5ab8ea"/><stop offset="1" stop-color="#8fd0f4"/></linearGradient>
<radialGradient id="face" cx=".5" cy=".42" r=".62"><stop offset="0" stop-color="#e2bfae"/><stop offset=".7" stop-color="#d2a897"/><stop offset="1" stop-color="#b98a7c"/></radialGradient>
<filter id="bl" x="-20%" y="-20%" width="140%" height="140%"><feGaussianBlur stdDeviation="4"/></filter>
<filter id="bl1"><feGaussianBlur stdDeviation="0.9"/></filter>
</defs>
<rect width="234" height="131" fill="url(#bg1)"/>
<g filter="url(#bl)">
<path d="M-10 10 Q40 30 110 80 L100 95 Q40 50 -10 40 Z" fill="#e8fbff" opacity=".75"/>
<path d="M-10 95 Q40 80 100 68 L100 80 Q40 100 -10 120 Z" fill="#d8f6ff" opacity=".6"/>
<path d="M-10 45 Q30 60 70 85 Q30 80 -10 75Z" fill="#1f6cb0" opacity=".7"/>
<path d="M160 -10 H244 V40 Q200 20 160 -10Z" fill="#e0f6ff" opacity=".7"/>
<path d="M175 60 Q210 80 244 70 V110 Q210 100 175 95Z" fill="#2e90d4" opacity=".6"/>
<path d="M0 0 H50 Q25 12 0 14Z" fill="#1a5a9a" opacity=".6"/>
</g>
<g filter="url(#bl1)">
<path d="M96 100 Q90 60 95 35 Q108 9 128 10 Q155 10 165 40 Q172 65 171 98 Q150 104 128 100 Q110 104 96 100 Z" fill="#33221f"/>
<path d="M114 78 L142 78 L146 112 L110 112 Z" fill="#d9b4a4"/>
<ellipse cx="128" cy="54" rx="24" ry="31" fill="url(#face)"/>
<path d="M104 42 Q106 20 128 21 Q150 21 153 42 Q148 27 128 26 Q108 27 104 42Z" fill="#33221f"/>
<path d="M63 131 Q66 100 82 90 Q98 86 110 94 Q128 110 146 95 Q162 90 176 95 Q186 108 190 131 Z" fill="#e9e8ee"/>

<g fill="#141420"><ellipse cx="72" cy="108" rx="2.8" ry="2.2"/><ellipse cx="84" cy="124" rx="2.6" ry="2.2"/><ellipse cx="80" cy="96" rx="2.3" ry="1.8"/><ellipse cx="104" cy="114" rx="2.5" ry="2"/><ellipse cx="165" cy="103" rx="2.8" ry="2.2"/><ellipse cx="179" cy="114" rx="2.5" ry="2"/><ellipse cx="152" cy="119" rx="2.5" ry="2"/><ellipse cx="128" cy="124" rx="2.5" ry="2"/><ellipse cx="176" cy="126" rx="2.5" ry="2"/><ellipse cx="97" cy="129" rx="2.3" ry="1.8"/></g>
<path d="M113 49 Q119 46 124 49 M133 49 Q138 46 144 49" stroke="#6a4a42" stroke-width="1.6" fill="none"/>
<path d="M121 71 Q128 73 135 71" stroke="#a06a62" stroke-width="1.5" fill="none"/>
<path d="M128 52 L126 64 L131 65" stroke="#b08070" stroke-width="1" fill="none"/>
</g>
</svg>
<div class="lbl" style="top:112px;left:0;background:rgba(50,55,60,.6);font-size:12.5px;letter-spacing:.3px">Анна Скиба</div>
</div>
<div class="tile" style="top:136px;height:134px;border:1px solid #62804a">
<svg width="84" height="84" viewBox="0 0 84 84" style="position:absolute;left:75px;top:24px;filter:blur(.8px)">
<defs><linearGradient id="mbg" x1="0" y1="0" x2="0" y2="1"><stop offset="0" stop-color="#e8e4de"/><stop offset=".3" stop-color="#d6d0c6"/><stop offset="1" stop-color="#b8b0a4"/></linearGradient></defs>
<rect width="84" height="84" fill="url(#mbg)"/>
<path d="M0 0 L34 0 Q30 14 20 18 L0 24 Z" fill="#cdbfae"/>
<path d="M0 12 Q10 6 22 10 Q18 18 6 20 Z" fill="#3a2e26"/>
<path d="M40 0 H84 V20 Q60 14 40 0Z" fill="#f0eee8"/>
<path d="M56 26 Q70 20 84 24 V80 H60 Q54 60 56 26Z" fill="#8c7e6c"/>
<path d="M4 84 Q8 64 26 58 L60 58 Q76 64 80 84 Z" fill="#c4bcb2"/>
<rect x="35" y="46" width="16" height="14" fill="#c8a090"/>
<ellipse cx="43" cy="37" rx="12.5" ry="16" fill="#caa08c"/>
<path d="M30 34 Q29 18 43 17 Q57 18 56 34 Q52 25 43 25 Q34 25 30 34Z" fill="#2a221e"/>
<path d="M32 42 Q35 56 43 57 Q51 56 54 42 Q52 50 43 51 Q34 50 32 42Z" fill="#3a2a22"/>
<path d="M35 36 L40 36 M46 36 L51 36" stroke="#3a2a24" stroke-width="1.8"/>
</svg>
<div class="lbl" style="top:113px;left:0px"><svg class="mic" width="14" height="15" viewBox="0 0 14 15"><path d="M5 2 Q7 0 9 2 L8 8 Q7 10 5 8 Z" fill="#d84a4a"/><path d="M3 7 Q4 12 8 11" stroke="#d84a4a" stroke-width="1.5" fill="none"/><path d="M11 1 L2 14" stroke="#e05050" stroke-width="2"/></svg>Щирський Ярослав</div>
</div>
<div class="tile" style="top:271px;height:133px">
<div class="big" style="top:55px">Давидюк Анна</div>
<div class="lbl" style="top:112px;left:0px"><svg class="mic" width="14" height="15" viewBox="0 0 14 15"><path d="M5 2 Q7 0 9 2 L8 8 Q7 10 5 8 Z" fill="#d84a4a"/><path d="M3 7 Q4 12 8 11" stroke="#d84a4a" stroke-width="1.5" fill="none"/><path d="M11 1 L2 14" stroke="#e05050" stroke-width="2"/></svg>Давидюк Анна</div>
</div>
<div class="tile" style="top:405px;height:133px">
<svg width="84" height="84" viewBox="0 0 84 84" style="position:absolute;left:75px;top:24px;filter:blur(.8px)">
<rect width="84" height="84" fill="#a8946e"/>
<rect x="0" y="0" width="84" height="10" fill="#c4c0b4"/>
<path d="M0 6 Q14 4 26 10 L24 40 L0 44Z" fill="#7e9a56"/>
<path d="M60 6 Q74 4 84 8 V36 H62Z" fill="#9aa486"/>
<g fill="#8e8478"><rect x="16" y="28" width="16" height="18"/><rect x="33" y="27" width="16" height="18"/><rect x="49" y="28" width="15" height="18"/></g>
<rect x="64" y="32" width="19" height="52" fill="#c9aaa0"/>
<path d="M64 40 H83 M64 48 H83 M64 56 H83 M64 64 H83" stroke="#e6d0c8" stroke-width="2"/>
<g fill="#5a4232"><circle cx="24" cy="22" r="5"/><circle cx="41" cy="20" r="5"/><circle cx="57" cy="21" r="5"/><circle cx="74" cy="24" r="5"/></g>
<rect x="0" y="45" width="14" height="39" fill="#bfae92"/>
<circle cx="8" cy="42" r="4" fill="#5a4232"/>
<rect x="12" y="43" width="58" height="40" fill="#1f58cc"/>
<path d="M24 64 Q30 50 46 52 Q58 54 60 62" stroke="#a8d0ff" stroke-width="2" fill="none"/>
<path d="M22 70 Q30 66 36 68" stroke="#a8d0ff" stroke-width="1.5" fill="none"/>
<path d="M37 84 L39 70 Q47 62 55 70 L57 84Z" fill="#f0f0f0"/>
<circle cx="47" cy="63" r="4" fill="#5a4232"/>
</svg>
<div class="lbl" style="top:112px;left:0px"><svg class="mic" width="14" height="15" viewBox="0 0 14 15"><path d="M5 2 Q7 0 9 2 L8 8 Q7 10 5 8 Z" fill="#d84a4a"/><path d="M3 7 Q4 12 8 11" stroke="#d84a4a" stroke-width="1.5" fill="none"/><path d="M11 1 L2 14" stroke="#e05050" stroke-width="2"/></svg>Артур Наконечний</div>
</div>
<div class="tile" style="top:539px;height:132px">
<div class="big" style="top:55px">Волох Ліза</div>
<div class="lbl" style="top:112px;left:0px"><svg class="mic" width="14" height="15" viewBox="0 0 14 15"><path d="M5 2 Q7 0 9 2 L8 8 Q7 10 5 8 Z" fill="#d84a4a"/><path d="M3 7 Q4 12 8 11" stroke="#d84a4a" stroke-width="1.5" fill="none"/><path d="M11 1 L2 14" stroke="#e05050" stroke-width="2"/></svg>Волох Ліза</div>
</div>
</div>
<div id="status" class="abs">
<div class="t" style="left:6px;top:4px;font-size:10.8px;color:#555">Слайд 7 из 12</div>
<svg class="ic" style="left:90px;top:3px" width="16" height="14" viewBox="0 0 16 14" stroke="#666" fill="none"><path d="M1 1H8V13H1Z"/><path d="M9 1H14L15 2V13H9"/><path d="M10 10L14 4"/></svg>
<div class="t" style="left:120px;top:4px;font-size:10.8px;color:#555">английский (США)</div>
<svg class="ic" style="left:1092px;top:3px" width="12" height="14" viewBox="0 0 12 14" stroke="#666" fill="none"><path d="M3 4L6 1L9 4"/><path d="M1 7H11M1 10H11M1 13H11"/></svg>
<div class="t" style="left:1109px;top:3px;font-size:11.5px;color:#555">Заметки</div>
<svg class="ic" style="left:1166px;top:3px" width="14" height="13" viewBox="0 0 14 13"><path d="M1 1H13V9H6L3 12V9H1Z" fill="#666"/></svg>
<div class="t" style="left:1183px;top:3px;font-size:11.5px;color:#555">Примечания</div>
<div class="abs" style="left:1263px;top:0;width:33px;height:20px;background:#d4d4d4"></div>
<svg class="ic" style="left:1272px;top:3px" width="14" height="13" viewBox="0 0 14 13" stroke="#666" fill="none"><rect x=".5" y=".5" width="13" height="12"/><path d="M4 1V12M6 4H11M6 7H11"/></svg>
<svg class="ic" style="left:1306px;top:3px" width="14" height="13" viewBox="0 0 14 13" stroke="#666" fill="none"><rect x=".5" y=".5" width="5" height="5"/><rect x="8.5" y=".5" width="5" height="5"/><rect x=".5" y="7.5" width="5" height="5"/><rect x="8.5" y="7.5" width="5" height="5"/></svg>
<svg class="ic" style="left:1340px;top:3px" width="14" height="13" viewBox="0 0 14 13" stroke="#666" fill="none"><path d="M1 1H6L7 2L8 1H13V12H8L7 13L6 12H1Z"/><path d="M7 2V12"/></svg>
<svg class="ic" style="left:1374px;top:3px" width="14" height="14" viewBox="0 0 14 14" stroke="#666" fill="none"><path d="M1 1H13"/><rect x="2.5" y="1.5" width="9" height="6"/><path d="M7 8V12M4 13H10"/></svg>
<div class="abs" style="left:1403px;top:10px;width:7px;height:1.5px;background:#555"></div>
<div class="abs" style="left:1415px;top:10px;width:102px;height:1px;background:#999"></div>
<div class="abs" style="left:1459px;top:4px;width:4px;height:13px;background:#555"></div>
<div class="abs" style="left:1522px;top:10px;width:10px;height:1.5px;background:#555"></div>
<div class="abs" style="left:1526px;top:6px;width:1.5px;height:10px;background:#555"></div>
<div class="t" style="left:1543px;top:3px;font-size:11.5px;color:#555">88 %</div>
<svg class="ic" style="left:1580px;top:3px" width="14" height="14" viewBox="0 0 14 14" stroke="#666" fill="none"><rect x=".5" y=".5" width="13" height="13"/><path d="M3 3H6M3 3V6M11 3H8M11 3V6M3 11H6M3 11V8M11 11H8M11 11V8"/></svg>
</div>
<div id="taskbar" class="abs"><div class="abs" style="left:363px;top:0;width:51px;height:9px;background:#4a4a4a"></div><div class="abs" style="left:1493px;top:5px;width:30px;height:4px;background:repeating-linear-gradient(90deg,#eee 0 4px,transparent 4px 8px)"></div></div>
<div class="abs" style="left:1185px;top:750px;font-size:19.5px;letter-spacing:.6px;color:rgba(140,140,140,.45);white-space:nowrap">Активация Windows</div>
<div class="abs" style="left:1185px;top:778px;font-size:14.7px;letter-spacing:.1px;color:rgba(140,140,140,.45);white-space:nowrap">Чтобы активировать Windows, перейдите в раздел</div>
</body></html>
